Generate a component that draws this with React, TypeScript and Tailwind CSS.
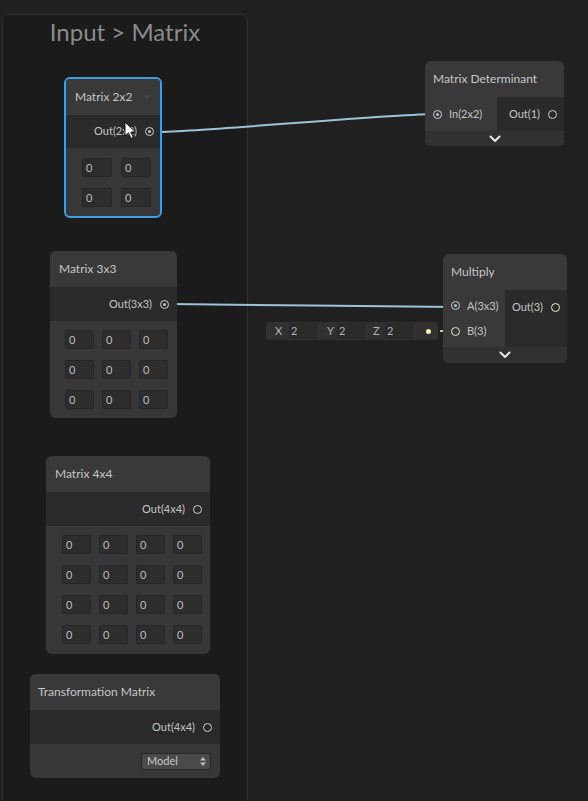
import React from "react";

const F = { fontFamily: 'Lato, "Open Sans", sans-serif' };

function Port({ filled, color = "border-[#cfcfcf]", dot = "bg-[#a9c4d6]" }: { filled?: boolean; color?: string; dot?: string }) {
  return (
    <span className={`flex h-[9px] w-[9px] shrink-0 items-center justify-center rounded-full border-[1.5px] ${color}`}>
      {filled ? <span className={`h-[3px] w-[3px] rounded-full ${dot}`} /> : null}
    </span>
  );
}

function Field({ w = "w-[29px]", v = "0" }: { w?: string; v?: string }) {
  return (
    <div className={`${w} h-[19px] rounded-[2px] border border-[#262626] bg-[#2d2d2d] pl-[3px] text-[11px] leading-[17px] text-[#bdbdbd]`}>
      {v}
    </div>
  );
}

function Grid({ n }: { n: number }) {
  const rows = Array.from({ length: n });
  return (
    <div className="flex flex-col gap-[11px]">
      {rows.map((_, r) => (
        <div key={r} className="flex gap-[8px]">
          {rows.map((__, c) => (
            <Field key={c} />
          ))}
        </div>
      ))}
    </div>
  );
}

function Chevron({ className = "", w = 12, h = 8 }: { className?: string; w?: number; h?: number }) {
  return (
    <svg width={w} height={h} viewBox="0 0 12 8" className={className}>
      <path d="M1.5 1.5 L6 6 L10.5 1.5" fill="none" stroke="currentColor" strokeWidth="2" strokeLinecap="round" strokeLinejoin="round" />
    </svg>
  );
}

function OutRow({ label, filled }: { label: string; filled?: boolean }) {
  return (
    <div className="flex h-[34px] items-center justify-end gap-[8px] bg-[#2a2a2a] pr-[8px] text-[11px] text-[#c4c4c4]">
      <span>{label}</span>
      <Port filled={filled} />
    </div>
  );
}

export default function App() {
  return (
    <div className="relative h-[801px] w-[588px] overflow-hidden bg-[#202020]" style={F}>
      {/* Left panel */}
      <div className="absolute left-[2px] top-[14px] h-[800px] w-[246px] rounded-t-[6px] border border-[#2f2f2f] bg-[#1b1b1b]">
        <div className="pt-[2px] text-center text-[24px] leading-[30px] text-[#8a8a8a]">Input &gt; Matrix</div>
      </div>

      {/* Edges */}
      <svg className="absolute left-0 top-0" width="588" height="801">
        <path d="M154 132 C 200 132, 390 114, 437 114" fill="none" stroke="#9ec2d6" strokeWidth="2" />
        <path d="M170 304 C 220 304, 405 307, 455 307" fill="none" stroke="#9ec2d6" strokeWidth="2" />
        <line x1="428" y1="331" x2="451" y2="331" stroke="#c8c9a0" strokeWidth="2" strokeDasharray="4 2" />
      </svg>

      {/* Matrix 2x2 (selected) */}
      <div className="absolute left-[64px] top-[77px] w-[98px] overflow-hidden rounded-[6px] border-2 border-[#3d9ee6] bg-[#373737]">
        <div className="flex h-[36px] items-center justify-between bg-[#393939] pl-[9px] pr-[9px] text-[12px] text-[#c6c6c6]">
          <span>Matrix 2x2</span>
          <Chevron className="text-[#4c4c4c]" w={8} h={6} />
        </div>
        <div className="flex h-[33px] items-center justify-end gap-[8px] bg-[#2a2a2a] pr-[6px] text-[11px] text-[#c4c4c4]">
          <span>Out(2x2)</span>
          <Port filled />
        </div>
        <div className="flex justify-end pb-[9px] pr-[9px] pt-[10px]">
          <div className="flex flex-col gap-[11px]">
            {[0, 1].map((r) => (
              <div key={r} className="flex gap-[9px]">
                <Field w="w-[30px]" />
                <Field w="w-[30px]" />
              </div>
            ))}
          </div>
        </div>
      </div>

      {/* Matrix 3x3 */}
      <div className="absolute left-[50px] top-[251px] w-[127px] overflow-hidden rounded-[6px] bg-[#373737]">
        <div className="flex h-[36px] items-center bg-[#393939] pl-[9px] text-[12px] text-[#c6c6c6]">Matrix 3x3</div>
        <OutRow label="Out(3x3)" filled />
        <div className="flex justify-end pb-[9px] pr-[9px] pt-[9px]">
          <Grid n={3} />
        </div>
      </div>

      {/* Matrix 4x4 */}
      <div className="absolute left-[46px] top-[456px] w-[164px] overflow-hidden rounded-[6px] bg-[#373737]">
        <div className="flex h-[36px] items-center bg-[#393939] pl-[9px] text-[12px] text-[#c6c6c6]">Matrix 4x4</div>
        <OutRow label="Out(4x4)" />
        <div className="flex justify-end pb-[10px] pr-[8px] pt-[9px]">
          <Grid n={4} />
        </div>
      </div>

      {/* Transformation Matrix */}
      <div className="absolute left-[30px] top-[674px] w-[190px] overflow-hidden rounded-[6px] bg-[#373737]">
        <div className="flex h-[36px] items-center bg-[#393939] pl-[8px] text-[12px] text-[#c6c6c6]">Transformation Matrix</div>
        <OutRow label="Out(4x4)" />
        <div className="flex h-[34px] items-center justify-end pr-[9px]">
          <div className="flex h-[17px] w-[70px] items-center justify-between rounded-[3px] border border-[#262626] bg-[#4a4a4a] pl-[5px] pr-[4px] text-[11px] text-[#c8c8c8]">
            <span>Model</span>
            <svg width="6" height="9" viewBox="0 0 6 9">
              <path d="M3 0 L6 3.5 H0 Z M3 9 L0 5.5 H6 Z" fill="#bdbdbd" />
            </svg>
          </div>
        </div>
      </div>

      {/* Matrix Determinant */}
      <div className="absolute left-[425px] top-[61px] w-[139px] overflow-hidden rounded-[6px] bg-[#393939]">
        <div className="flex h-[36px] items-center pl-[8px] text-[12px] text-[#c6c6c6]">Matrix Determinant</div>
        <div className="flex h-[34px]">
          <div className="flex w-[72px] items-center gap-[7px] bg-[#393939] pl-[8px] text-[11px] text-[#c4c4c4]">
            <Port filled />
            <span>In(2x2)</span>
          </div>
          <div className="flex flex-1 items-center justify-end gap-[8px] bg-[#2a2a2a] pr-[7px] text-[11px] text-[#c4c4c4]">
            <span>Out(1)</span>
            <Port />
          </div>
        </div>
        <div className="flex h-[15px] items-center justify-center bg-[#313131] text-[#e6e6e6]">
          <Chevron />
        </div>
      </div>

      {/* Inline vector field */}
      <div className="absolute left-[266px] top-[322px] flex h-[18px] w-[172px] items-center rounded-[2px] bg-[#303030] pl-[9px] text-[11px] text-[#b5b5b5]">
        <span className="w-[14px]">X</span>
        <div className="h-[16px] w-[28px] rounded-[2px] bg-[#2a2a2a] pl-[2px] leading-[16px]">2</div>
        <span className="ml-[10px] w-[10px]">Y</span>
        <div className="h-[16px] w-[28px] rounded-[2px] bg-[#2a2a2a] pl-[2px] leading-[16px]">2</div>
        <span className="ml-[8px] w-[12px]">Z</span>
        <div className="h-[16px] w-[28px] rounded-[2px] bg-[#2a2a2a] pl-[2px] leading-[16px]">2</div>
        <span className="ml-[13px] h-[5px] w-[5px] rounded-full bg-[#f4f6a8]" />
      </div>

      {/* Multiply */}
      <div className="absolute left-[443px] top-[254px] w-[124px] overflow-hidden rounded-[6px] bg-[#393939]">
        <div className="flex h-[36px] items-center pl-[8px] text-[12px] text-[#c6c6c6]">Multiply</div>
        <div className="flex h-[57px]">
          <div className="flex w-[62px] flex-col justify-center gap-[9px] bg-[#393939] pl-[8px] text-[11px] text-[#c4c4c4]">
            <div className="flex items-center gap-[7px]">
              <Port filled />
              <span>A(3x3)</span>
            </div>
            <div className="flex items-center gap-[7px]">
              <Port color="border-[#e8e8d0]" />
              <span>B(3)</span>
            </div>
          </div>
          <div className="flex flex-1 items-start justify-end gap-[8px] bg-[#2a2a2a] pr-[7px] pt-[9px] text-[11px] text-[#c4c4c4]">
            <span>Out(3)</span>
            <span className="mt-[4px]"><Port color="border-[#eef0c0]" /></span>
          </div>
        </div>
        <div className="flex h-[16px] items-center justify-center bg-[#313131] text-[#e6e6e6]">
          <Chevron />
        </div>
      </div>

      {/* Cursor */}
      <svg className="absolute left-[124px] top-[121px]" width="14" height="20" viewBox="0 0 14 20">
        <path d="M1 1 L1 15 L4.5 11.8 L7 17.5 L9.3 16.5 L6.9 11 L11.5 11 Z" fill="#ffffff" stroke="#111111" strokeWidth="1" strokeLinejoin="round" />
      </svg>
    </div>
  );
}
